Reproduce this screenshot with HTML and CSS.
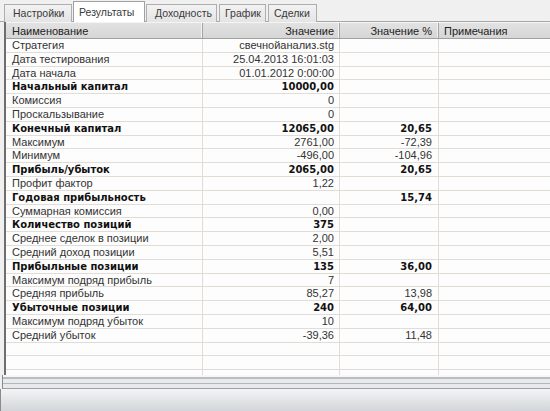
FILE: index.html
```html
<!DOCTYPE html>
<html lang="ru">
<head>
<meta charset="utf-8">
<title>Результаты</title>
<link rel="stylesheet" href="styles.css">
</head>
<body>
<div class="window">
  <div class="tabs">
    <div class="tab">Настройки</div>
    <div class="tab active">Результаты</div>
    <div class="tab">Доходность</div>
    <div class="tab">График</div>
    <div class="tab">Сделки</div>
  </div>
  <div class="panel">
    <div class="grid">
      <div class="row head">
        <div class="c c1">Наименование</div>
        <div class="c c2">Значение</div>
        <div class="c c3">Значение %</div>
        <div class="c c4">Примечания</div>
      </div>
      <div class="row"><div class="c c1">Стратегия</div><div class="c c2">свечнойанализ.stg</div><div class="c c3"></div><div class="c c4"></div></div>
      <div class="row"><div class="c c1">Дата тестирования</div><div class="c c2">25.04.2013 16:01:03</div><div class="c c3"></div><div class="c c4"></div></div>
      <div class="row"><div class="c c1">Дата начала</div><div class="c c2">01.01.2012 0:00:00</div><div class="c c3"></div><div class="c c4"></div></div>
      <div class="row bold"><div class="c c1">Начальный капитал</div><div class="c c2">10000,00</div><div class="c c3"></div><div class="c c4"></div></div>
      <div class="row"><div class="c c1">Комиссия</div><div class="c c2">0</div><div class="c c3"></div><div class="c c4"></div></div>
      <div class="row"><div class="c c1">Проскальзывание</div><div class="c c2">0</div><div class="c c3"></div><div class="c c4"></div></div>
      <div class="row bold"><div class="c c1">Конечный капитал</div><div class="c c2">12065,00</div><div class="c c3">20,65</div><div class="c c4"></div></div>
      <div class="row"><div class="c c1">Максимум</div><div class="c c2">2761,00</div><div class="c c3">-72,39</div><div class="c c4"></div></div>
      <div class="row"><div class="c c1">Минимум</div><div class="c c2">-496,00</div><div class="c c3">-104,96</div><div class="c c4"></div></div>
      <div class="row bold"><div class="c c1">Прибыль/убыток</div><div class="c c2">2065,00</div><div class="c c3">20,65</div><div class="c c4"></div></div>
      <div class="row"><div class="c c1">Профит фактор</div><div class="c c2">1,22</div><div class="c c3"></div><div class="c c4"></div></div>
      <div class="row bold"><div class="c c1">Годовая прибыльность</div><div class="c c2"></div><div class="c c3">15,74</div><div class="c c4"></div></div>
      <div class="row"><div class="c c1">Суммарная комиссия</div><div class="c c2">0,00</div><div class="c c3"></div><div class="c c4"></div></div>
      <div class="row bold"><div class="c c1">Количество позиций</div><div class="c c2">375</div><div class="c c3"></div><div class="c c4"></div></div>
      <div class="row"><div class="c c1">Среднее сделок в позиции</div><div class="c c2">2,00</div><div class="c c3"></div><div class="c c4"></div></div>
      <div class="row"><div class="c c1">Средний доход позиции</div><div class="c c2">5,51</div><div class="c c3"></div><div class="c c4"></div></div>
      <div class="row bold"><div class="c c1">Прибыльные позиции</div><div class="c c2">135</div><div class="c c3">36,00</div><div class="c c4"></div></div>
      <div class="row"><div class="c c1">Максимум подряд прибыль</div><div class="c c2">7</div><div class="c c3"></div><div class="c c4"></div></div>
      <div class="row"><div class="c c1">Средняя прибыль</div><div class="c c2">85,27</div><div class="c c3">13,98</div><div class="c c4"></div></div>
      <div class="row bold"><div class="c c1">Убыточные позиции</div><div class="c c2">240</div><div class="c c3">64,00</div><div class="c c4"></div></div>
      <div class="row"><div class="c c1">Максимум подряд убыток</div><div class="c c2">10</div><div class="c c3"></div><div class="c c4"></div></div>
      <div class="row"><div class="c c1">Средний убыток</div><div class="c c2">-39,36</div><div class="c c3">11,48</div><div class="c c4"></div></div>
      <div class="row"><div class="c c1"></div><div class="c c2"></div><div class="c c3"></div><div class="c c4"></div></div>
      <div class="row"><div class="c c1"></div><div class="c c2"></div><div class="c c3"></div><div class="c c4"></div></div>
      <div class="row"><div class="c c1"></div><div class="c c2"></div><div class="c c3"></div><div class="c c4"></div></div>
    </div>
  </div>
  <div class="split"></div>
  <div class="bar"></div>
</div>
</body>
</html>
```

FILE: styles.css
```css
html, body {
  margin: 0;
  padding: 0;
  background: #f0f0f0;
}
.window {
  width: 550px;
  height: 411px;
  overflow: hidden;
  display: flex;
  flex-direction: column;
  font-family: "Liberation Sans", Arial, sans-serif;
  font-size: 11px;
  color: #333;
}
.tabs {
  height: 22px;
  flex: none;
  display: flex;
  align-items: flex-end;
  padding-left: 4px;
  box-sizing: border-box;
  border-bottom: 1px solid #a7a7a7;
  background: #f0f0f0;
}
.tab {
  height: 18px;
  box-sizing: border-box;
  margin-bottom: -1px;
  padding: 1px 0 0 8px;
  margin-right: 2px;
  border: 1px solid #aeaeae;
  border-bottom: none;
  background: linear-gradient(#f2f2f2, #e4e4e4);
  color: #3a3a3a;
  font-size: 10.5px;
  line-height: 14px;
  white-space: nowrap;
}
.tab.active {
  height: 21px;
  background: #ffffff;
  padding-top: 3px;
  border-color: #a0a0a0;
  margin-left: -1px;
  margin-right: 1px;
  padding-left: 5px;
}
.tab:nth-child(1) { width: 68px; }
.tab:nth-child(2) { width: 72px; }
.tab:nth-child(3) { width: 71px; }
.tab:nth-child(4) { width: 47px; padding-left: 5px; }
.tab:nth-child(5) { width: 49px; padding-left: 5px; }

.panel {
  height: 353px;
  flex: none;
  margin-left: 4px;
  border-left: 2px solid #6e6e6e;
  background: #fdfdfd;
  overflow: hidden;
}
.grid {
  display: flex;
  flex-direction: column;
}
.row {
  display: grid;
  grid-template-columns: 197px 137px 99px 1fr;
  height: 13.8px;
  box-sizing: border-box;
  border-bottom: 1px solid #e1ddd6;
  line-height: 13.4px;
}
.row.head {
  height: 17px;
  background: linear-gradient(#e2e2e2, #d6d6d6);
  border-top: 1px solid #f4f4f4;
  border-bottom: 1px solid #a0a0a0;
  line-height: 16px;
  color: #222;
}
.c {
  box-sizing: border-box;
  border-right: 1px solid #e1ddd6;
  white-space: nowrap;
  overflow: hidden;
}
.c1 { padding-left: 6px; }
.c2 { text-align: right; padding-right: 5px; }
.c3 { text-align: right; padding-right: 6px; }
.c4 { padding-left: 5px; border-right: none; }
.row.head .c {
  border-right: 1px solid #a4a4a4;
  box-shadow: inset -1px 0 0 #f2f2f2;
}
.row.head .c1 { padding-left: 6px; }
.row.head .c4 { padding-left: 5px; border-right: none; box-shadow: none; }
.row.bold {
  font-family: "DejaVu Sans", Verdana, sans-serif;
  font-weight: bold;
  font-size: 10px;
  color: #111;
}
.split {
  height: 14px;
  flex: none;
  margin-left: 2px;
  border-left: 1px solid #8a8a8a;
  background: linear-gradient(#f6f6f6 0 2px, #b9bcc1 2px 4px, #e9eaec 4px 8px, #b3b6ba 8px 9px, #e8e9eb 9px 13px, #9da1a6 13px 14px);
}
.bar {
  flex: 1;
  border-left: 1px solid #8a8a8a;
  background: linear-gradient(#f3f4f5, #d2d5d9);
}
```
